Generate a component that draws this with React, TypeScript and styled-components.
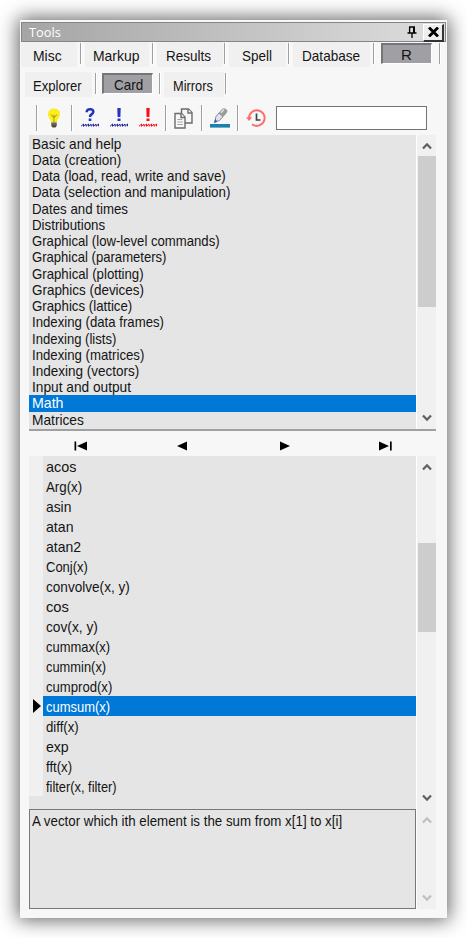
import React, { useLayoutEffect, useRef, useState } from "react";
import styled, { createGlobalStyle } from "styled-components";

const GlobalStyle = createGlobalStyle`
  * { box-sizing: border-box; }
  body { margin: 0; background: #fff; }
`;

const Page = styled.main`
  width: 467px;
  height: 938px;
  padding: 20px;
  overflow: hidden;
  background: #fff;
  font: 14.4px/16px "Liberation Sans", sans-serif;
  color: #141414;
`;

const Panel = styled.section`
  width: 427px;
  height: 898px;
  padding-top: 2px;
  display: flex;
  flex-direction: column;
  background: #f7f7f7;
  box-shadow: 0 0 18px 2px rgba(0, 0, 0, 0.62);
`;

const TitleBar = styled.header`
  flex: none;
  height: 20px;
  margin: 0 1px 0 1px;
  padding: 0 1px 0 7px;
  display: flex;
  align-items: center;
  border: 1px solid #858585;
  background: linear-gradient(90deg, #a5a5a5, #dedede);
  color: #fff;
  font: 12.6px/17px "Open Sans", sans-serif;
`;

const TitleText = styled.h1`
  flex: 1;
  margin: 0;
  font: inherit;
`;

const PinButton = styled.button`
  width: 20px;
  height: 16px;
  padding: 0;
  display: grid;
  place-items: center;
  border: 0;
  background: none;
`;

const CloseButton = styled(PinButton)`
  width: 21px;
  height: 18px;
  margin: 1px 0 0 1px;
  background: #eee;
  border: solid;
  border-width: 1px 2px 2px 1px;
  border-color: #fff #333 #333 #fff;
`;

const TabRow = styled.nav<{ $inset: number; $top: number }>`
  flex: none;
  height: 25px;
  margin-top: ${(p) => p.$top}px;
  padding-left: ${(p) => p.$inset}px;
  display: flex;
  align-items: flex-start;
`;

const Tab = styled.button<{ $width: number; $pad: number; $gap: number }>`
  flex: none;
  width: ${(p) => p.$width}px;
  height: 25px;
  margin-right: ${(p) => p.$gap}px;
  padding: 3px 0 0 ${(p) => p.$pad}px;
  border: 0;
  background: #f0f0f0;
  color: inherit;
  font: inherit;
  text-align: left;
`;

const PressedTab = styled(Tab)`
  height: 21px;
  margin-top: 1px;
  padding-top: 1px;
  background: #a0a0a4;
  border: solid;
  border-width: 2px 1px 1px 2px;
  border-color: #76767a #fff #fff #76767a;
`;

const Divider = styled.span<{ $height: number; $gap: number }>`
  flex: none;
  width: 1px;
  height: ${(p) => p.$height}px;
  margin: 1px ${(p) => p.$gap}px 0 0;
  background: #a0a0a0;
  box-shadow: 1px 0 #fff;
`;

const Toolbar = styled.div`
  flex: none;
  height: 38px;
  padding: 7px 0 0 16px;
  display: flex;
  align-items: flex-start;
`;

const ToolGroup = styled.div`
  flex: none;
  padding-right: 3px;
  display: flex;
`;

const Tool = styled.button<{ $width: number }>`
  flex: none;
  width: ${(p) => p.$width}px;
  height: 28px;
  padding: 0;
  display: grid;
  place-items: center;
  border: 0;
  background: none;
`;

const Search = styled.input`
  width: 151px;
  height: 24px;
  margin: 2px 0 0 2px;
  border: 1px solid #737373;
  background: #fff;
  outline: 0;
`;

const Split = styled.div<{ $height: number }>`
  flex: none;
  height: ${(p) => p.$height}px;
  margin: 0 11px 0 9px;
  display: flex;
  background: #e5e5e5;
`;

const ListBox = styled.ul<{ $top: number }>`
  flex: 1;
  margin: 0;
  padding: ${(p) => p.$top}px 0 0;
  list-style: none;
`;

const Row = styled.li<{ $height: number; $inset: number; $drop: number; $selected: boolean }>`
  height: ${(p) => p.$height}px;
  padding: ${(p) => p.$drop}px 0 0 ${(p) => p.$inset}px;
  display: flex;
  align-items: center;
  background: ${(p) => (p.$selected ? "#0078d7" : "transparent")};
  color: ${(p) => (p.$selected ? "#fff" : "inherit")};
`;

const Gutter = styled.div`
  width: 14px;
  height: 340px;
  padding: 243px 0 0 4px;
  background: #f0f0f0;
  svg { display: block; }
`;

const Track = styled.div`
  width: 20px;
  padding: 7px 0;
  display: flex;
  flex-direction: column;
  align-items: center;
  justify-content: space-between;
  border-left: 1px solid #fff;
  background: #f0f0f0;
`;

const ThumbSpace = styled.div<{ $top: number }>`
  flex: 1;
  width: 18px;
  padding-top: ${(p) => p.$top}px;
`;

const Thumb = styled.div<{ $height: number }>`
  height: ${(p) => p.$height}px;
  background: #cdcdcd;
`;

const Navigator = styled.div`
  flex: none;
  height: 27px;
  margin: 0 11px 0 9px;
  padding: 4px 0 0 1px;
  display: grid;
  grid-template-columns: repeat(4, 1fr);
  place-items: center;
  border-top: 2px solid #a0a0a0;
`;

const Description = styled.p`
  flex: 1;
  margin: 0;
  padding: 3px 0 0 2px;
  border: 1px solid #787878;
`;

const Label = styled.span`
  display: inline-block;
  white-space: pre;
  transform-origin: 0 50%;
`;

/* Condenses the label so that its glyphs take the width of the dialog's bitmap font. */
function Text({ children, width }: { children: string; width: number }) {
  const ref = useRef<HTMLSpanElement>(null);
  const [scale, setScale] = useState(1);
  useLayoutEffect(() => {
    setScale((width + 1.5) / ref.current!.offsetWidth);
  }, [children, width]);
  return (
    <Label ref={ref} style={{ transform: `scaleX(${scale})` }}>
      {children}
    </Label>
  );
}

const Chevron = ({ up, dim }: { up?: boolean; dim?: boolean }) => (
  <svg width="10" height="8" viewBox="0 0 10 8" fill="none" stroke={dim ? "#bfbfbf" : "#606060"} strokeWidth="2.3">
    <path d={up ? "M1 6.5 5 2.3 9 6.5" : "M1 1.5 5 5.7 9 1.5"} />
  </svg>
);

function Scrollbar({ top = 0, thumb = 0, dim }: { top?: number; thumb?: number; dim?: boolean }) {
  return (
    <Track>
      <Chevron up dim={dim} />
      <ThumbSpace $top={top}>{thumb > 0 && <Thumb $height={thumb} />}</ThumbSpace>
      <Chevron dim={dim} />
    </Track>
  );
}

const PinIcon = () => (
  <svg width="10" height="12" viewBox="0 0 10 12" fill="none" stroke="#000" strokeWidth="1.3">
    <path d="M2 1h6M2.6 1v6M.5 7h9M5 7v5" />
    <path d="M7 1v6" strokeWidth="2" />
  </svg>
);

const CloseIcon = () => (
  <svg width="11" height="10" viewBox="0 0 11 10" stroke="#000" strokeWidth="2.8">
    <path d="M1 .5 10 9.5M10 .5 1 9.5" />
  </svg>
);

const BulbIcon = () => (
  <svg width="14" height="20" viewBox="0 0 14 20">
    <path d="M7 .5C3 .5 1 3 1 6.300c0 3 2.700 4.700 3.100 8.200h5.800C10.300 11 13 9.300 13 6.300 13 3 11 .5 7 .5Z" fill="#fbee1e" />
    <path d="M4 6.500 6.300 9 7 7.500 7.700 9 10 6.500M7 8v6" fill="none" stroke="#b5a51c" strokeWidth="1.100" />
    <path d="M4.300 14.500h5.400V18L8.500 19.500h-3L4.300 18Z" fill="#4f4d40" />
    <path d="M4.300 16h5.400" stroke="#99947c" strokeWidth=".7" />
  </svg>
);

const Squiggle = ({ color }: { color: string }) => (
  <path d="M0 18.300 2.500 16 2.500 18.300 5 16 5 18.300 7.500 16 7.500 18.300 10 16 10 18.300 12.500 16 12.500 18.300 15 16 15 18.300 17.500 16 17.500 18.300" fill="none" stroke={color} strokeWidth="1" />
);

const QuestionIcon = () => (
  <svg width="18" height="20" viewBox="0 0 18 20" fill="none">
    <path d="M5.800 4.300V3.200Q6.500 1.200 9 1.200q3.300 0 3.300 2.600 0 1.400-1.800 2.600Q9 7.400 9 9" stroke="#2234c0" strokeWidth="2.500" />
    <path d="M7.700 10.500h2.600V13H7.700Z" fill="#2234c0" />
    <Squiggle color="#26269a" />
  </svg>
);

const BangIcon = ({ color, line }: { color: string; line: string }) => (
  <svg width="18" height="20" viewBox="0 0 18 20">
    <path d="M7.300 0h3.400l-.3 9H7.600ZM7.500 10.500h3V13h-3Z" fill={color} />
    <Squiggle color={line} />
  </svg>
);

const CopyIcon = () => (
  <svg width="19" height="21" viewBox="0 0 19 21" fill="#f7f7f7" stroke="#6b6b6b" strokeWidth="1.400">
    <path d="M7.500 1h7l3.500 3.500V15H7.500Z" />
    <path d="M14 1v4h4" />
    <path d="M1 5.500h6.500L11 9v11H1Z" />
    <path d="M7 5.500v4h4" />
    <path d="M3.300 11.500h5M3.300 14h5.500M3.300 16.500h5.500" stroke="#a5a5a5" strokeWidth="1" />
  </svg>
);

const PenIcon = () => (
  <svg width="20" height="20" viewBox="0 0 20 20">
    <path d="M4.500 14.500 6 8.500 9 5 13 8.500 9.500 12.500Z" fill="#dce5ed" stroke="#818b95" strokeWidth="1" />
    <path d="M9 5 12.500 1Q15 0 16.800 2.200 17.800 4 13 8.500Z" fill="#9a9d9d" stroke="#858989" strokeWidth=".7" />
    <path d="M10.800 4.700 14 1.500" stroke="#e5e5e5" strokeWidth="1.400" />
    <path d="M4 15 5.200 11 7.300 13.200Z" fill="#3d55d0" />
    <path d="M0 16h20v3.600H0Z" fill="#1b80ae" />
  </svg>
);

const HistoryIcon = () => (
  <svg width="20" height="18" viewBox="0 0 20 18" fill="none">
    <path d="M3 9A7.800 7.800 0 1 1 6 15.200" stroke="#ff6c6c" strokeWidth="2" />
    <path d="M0 8.300h6.200L3.100 12Z" fill="#ff6c6c" />
    <path d="M10.500 4.500V11H14.500" stroke="#3f4248" strokeWidth="1.700" />
  </svg>
);

const NavArrow = ({ back, bar }: { back?: boolean; bar?: boolean }) => (
  <svg width="14" height="10" viewBox="0 0 14 10" fill="#000">
    {back ? <path d={bar ? "M3 5 13 .5V9.500Z" : "M2 5 12 .5V9.500Z"} /> : <path d={bar ? "M11 5 1 .5V9.500Z" : "M13 5 3 .5V9.500Z"} />}
    {bar && <path d={back ? "M.5 .5h1.700v9H.5Z" : "M12 .5h1.700v9H12Z"} />}
  </svg>
);

const categories: [string, number][] = [
  ["Basic and help", 87.5], ["Data (creation)", 87.5], ["Data (load, read, write and save)", 192.5],
  ["Data (selection and manipulation)", 196.5], ["Dates and times", 94.5], ["Distributions", 71.5],
  ["Graphical (low-level commands)", 186.5], ["Graphical (parameters)", 133], ["Graphical (plotting)", 110.5],
  ["Graphics (devices)", 110.5], ["Graphics (lattice)", 99], ["Indexing (data frames)", 130.5],
  ["Indexing (lists)", 83], ["Indexing (matrices)", 110.5], ["Indexing (vectors)", 105.5],
  ["Input and output", 97.5], ["Math", 30], ["Matrices", 50],
];

const functions: [string, number][] = [
  ["acos", 28.5], ["Arg(x)", 34.5], ["asin", 23.5], ["atan", 26], ["atan2", 33.5], ["Conj(x)", 40],
  ["convolve(x, y)", 82.5], ["cos", 21], ["cov(x, y)", 50], ["cummax(x)", 62.5], ["cummin(x)", 58.5],
  ["cumprod(x)", 65], ["cumsum(x)", 62.5], ["diff(x)", 31.5], ["exp", 21], ["fft(x)", 25], ["filter(x, filter)", 69],
];

export default function App() {
  return (
    <>
      <GlobalStyle />
      <Page>
        <Panel>
          <TitleBar>
            <TitleText><Text width={30}>Tools</Text></TitleText>
            <PinButton aria-label="Pin"><PinIcon /></PinButton>
            <CloseButton aria-label="Close"><CloseIcon /></CloseButton>
          </TitleBar>

          <TabRow $top={0} $inset={1}>
            <Tab $width={56} $pad={12} $gap={3}><Text width={27.5}>Misc</Text></Tab>
            <Divider $height={21} $gap={4} />
            <Tab $width={64} $pad={8} $gap={3}><Text width={45}>Markup</Text></Tab>
            <Divider $height={21} $gap={4} />
            <Tab $width={66} $pad={9} $gap={1}><Text width={43.5}>Results</Text></Tab>
            <Divider $height={21} $gap={4} />
            <Tab $width={57} $pad={13} $gap={2}><Text width={28.5}>Spell</Text></Tab>
            <Divider $height={21} $gap={4} />
            <Tab $width={77} $pad={9} $gap={3}><Text width={57}>Database</Text></Tab>
            <Divider $height={21} $gap={7} />
            <PressedTab $width={51} $pad={18} $gap={7}><Text width={9}>R</Text></PressedTab>
            <Divider $height={21} $gap={0} />
          </TabRow>

          <TabRow $top={5} $inset={5}>
            <Tab $width={67} $pad={8} $gap={3}><Text width={47.5}>Explorer</Text></Tab>
            <Divider $height={21} $gap={6} />
            <PressedTab $width={51} $pad={10} $gap={6}><Text width={27.5}>Card</Text></PressedTab>
            <Divider $height={21} $gap={4} />
            <Tab $width={60} $pad={9} $gap={1}><Text width={38.5}>Mirrors</Text></Tab>
            <Divider $height={21} $gap={0} />
          </TabRow>

          <Toolbar>
            <Divider $height={26} $gap={0} />
            <Tool $width={34}><BulbIcon /></Tool>
            <Divider $height={26} $gap={3} />
            <ToolGroup>
              <Tool $width={29}><QuestionIcon /></Tool>
              <Tool $width={29}><BangIcon color="#2234c0" line="#26269a" /></Tool>
              <Tool $width={29}><BangIcon color="#f41018" line="#f41018" /></Tool>
            </ToolGroup>
            <Divider $height={26} $gap={0} />
            <Tool $width={35}><CopyIcon /></Tool>
            <Divider $height={26} $gap={0} />
            <Tool $width={35}><PenIcon /></Tool>
            <Divider $height={26} $gap={0} />
            <Tool $width={36}><HistoryIcon /></Tool>
            <Search aria-label="Search" />
          </Toolbar>

          <Split $height={294}>
            <ListBox $top={0.6}>
              {categories.map(([name, width]) => (
                <Row key={name} $height={16.24} $inset={3} $drop={0} $selected={name === "Math"}>
                  <Text width={width}>{name}</Text>
                </Row>
              ))}
            </ListBox>
            <Scrollbar top={6} thumb={151} />
          </Split>

          <Navigator>
            <NavArrow back bar />
            <NavArrow back />
            <NavArrow />
            <NavArrow bar />
          </Navigator>

          <Split $height={353}>
            <Gutter>
              <svg width="8" height="14" viewBox="0 0 8 14"><path d="M0 0 8 7 0 14Z" /></svg>
            </Gutter>
            <ListBox $top={0}>
              {functions.map(([name, width]) => (
                <Row key={name} $height={20.02} $inset={3} $drop={2} $selected={name === "cumsum(x)"}>
                  <Text width={width}>{name}</Text>
                </Row>
              ))}
            </ListBox>
            <Scrollbar top={72} thumb={89} />
          </Split>

          <Split $height={100}>
            <Description><Text width={308.5}>A vector which ith element is the sum from x[1] to x[i]</Text></Description>
            <Scrollbar dim />
          </Split>
        </Panel>
      </Page>
    </>
  );
}
